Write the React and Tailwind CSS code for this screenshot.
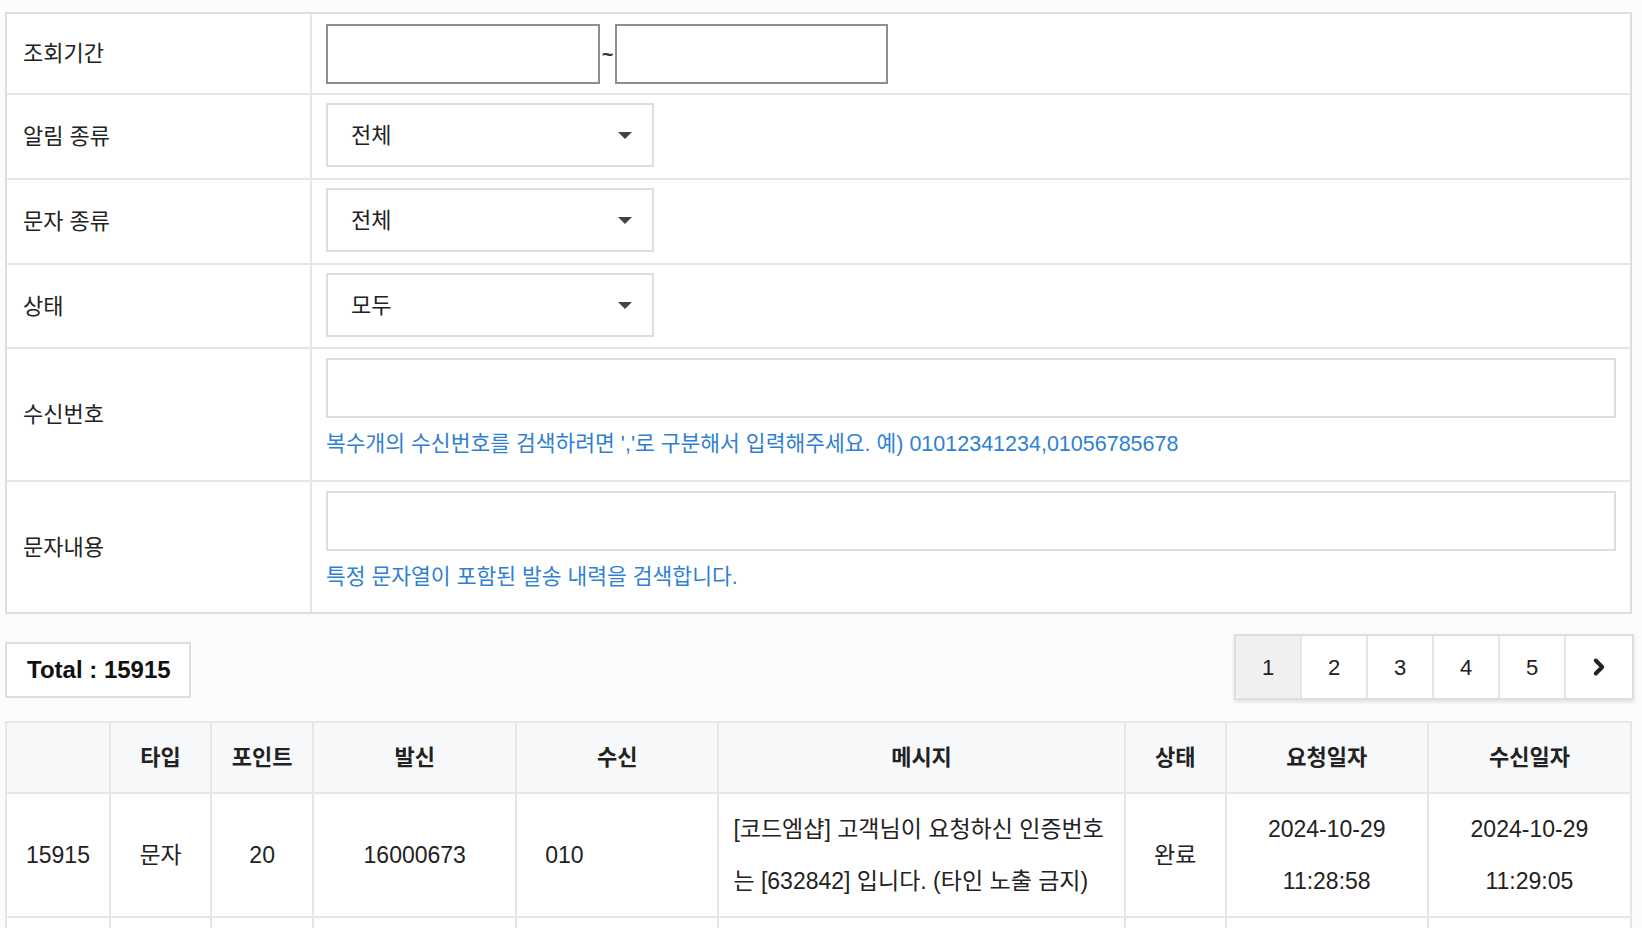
import { ChevronRight } from 'lucide-react'

const font = { fontFamily: '"Liberation Sans", "Noto Sans CJK KR", sans-serif' }

function Label({ children }) {
  return (
    <div className="flex items-center border-r-2 border-[#e6e6e6] pl-[16px] text-[22px] text-[#222]">
      {children}
    </div>
  )
}

function SelectBox({ value }) {
  return (
    <div className="flex h-[64px] w-[328px] items-center justify-between border-2 border-[#dedede] bg-white pl-[23px] pr-[20px] text-[22px] text-[#222]">
      <span>{value}</span>
      <span className="h-0 w-0 border-x-[7px] border-t-[7px] border-x-transparent border-t-[#444]" />
    </div>
  )
}

function Row({ label, children, last }) {
  return (
    <div className={`grid grid-cols-[305px_1fr] ${last ? '' : 'border-b-2 border-[#e6e6e6]'}`}>
      <Label>{label}</Label>
      <div className="px-[14px]">{children}</div>
    </div>
  )
}

const columns = [
  { title: '', w: 'w-[104px]' },
  { title: '타입', w: 'w-[101px]' },
  { title: '포인트', w: 'w-[102px]' },
  { title: '발신', w: 'w-[203px]' },
  { title: '수신', w: 'w-[202px]' },
  { title: '메시지', w: 'w-[406px]' },
  { title: '상태', w: 'w-[101px]' },
  { title: '요청일자', w: 'w-[202px]' },
  { title: '수신일자', w: 'w-[203px]' },
]

export default function App() {
  return (
    <div className="min-h-screen bg-[#fcfcfc] px-[5px] pt-[12px]" style={font}>
      <div className="w-[1627px] border-2 border-[#dedede] bg-white">
        <Row label="조회기간">
          <div className="flex h-[79px] items-center">
            <div className="h-[60px] w-[274px] border-2 border-[#8e8e8e] bg-white" />
            <span className="w-[15px] text-center text-[20px] font-bold leading-none text-[#333]">~</span>
            <div className="h-[60px] w-[273px] border-2 border-[#8e8e8e] bg-white" />
          </div>
        </Row>
        <Row label="알림 종류">
          <div className="pt-[8px] pb-[11px]">
            <SelectBox value="전체" />
          </div>
        </Row>
        <Row label="문자 종류">
          <div className="pt-[8px] pb-[11px]">
            <SelectBox value="전체" />
          </div>
        </Row>
        <Row label="상태">
          <div className="pt-[8px] pb-[10px]">
            <SelectBox value="모두" />
          </div>
        </Row>
        <Row label="수신번호">
          <div className="pt-[9px] pb-[20px]">
            <div className="h-[60px] w-full border-2 border-[#dedede] bg-white" />
            <p className="mt-[10px] text-[21.5px] leading-[32px] text-[#2f7fd2]">
              복수개의 수신번호를 검색하려면 ','로 구분해서 입력해주세요. 예) 01012341234,01056785678
            </p>
          </div>
        </Row>
        <Row label="문자내용" last>
          <div className="pt-[9px] pb-[19px]">
            <div className="h-[60px] w-full border-2 border-[#dedede] bg-white" />
            <p className="mt-[10px] text-[21.5px] leading-[32px] text-[#2f7fd2]">
              특정 문자열이 포함된 발송 내력을 검색합니다.
            </p>
          </div>
        </Row>
      </div>

      <div className="mt-[20px] flex w-[1627px] items-start justify-between">
        <div className="mt-[8px] flex h-[56px] w-[186px] items-center border-2 border-[#dedede] bg-white pl-[20px] text-[24px] font-bold text-[#111]">
          Total : 15915
        </div>
        <div className="mr-[-2px] flex h-[66px] border-2 border-[#dedede] bg-white shadow-[0_2px_4px_rgba(0,0,0,0.12)]">
          {['1', '2', '3', '4', '5'].map((n, i) => (
            <div
              key={n}
              className={`flex w-[66px] items-center justify-center border-r-2 border-[#e6e6e6] text-[22px] text-[#222] ${i === 0 ? 'rounded-bl-[5px] bg-[#f0f0f0]' : 'bg-white'}`}
            >
              {n}
            </div>
          ))}
          <div className="flex w-[66px] items-center justify-center text-[#222]">
            <ChevronRight size={26} strokeWidth={3.6} />
          </div>
        </div>
      </div>

      <table className="mt-[21px] w-[1627px] table-fixed border-collapse border-2 border-[#dedede] bg-white text-[23px] text-[#222]">
        <thead>
          <tr className="h-[71px] bg-[#f7f8fa] text-[22px]">
            {columns.map((c, i) => (
              <th key={i} className={`${c.w} border-2 border-[#e6e6e6] font-bold`}>
                {c.title}
              </th>
            ))}
          </tr>
        </thead>
        <tbody>
          <tr className="h-[124px]">
            <td className="border-2 border-[#e6e6e6] pl-[19px]">15915</td>
            <td className="border-2 border-[#e6e6e6] text-center">문자</td>
            <td className="border-2 border-[#e6e6e6] text-center">20</td>
            <td className="border-2 border-[#e6e6e6] text-center">16000673</td>
            <td className="border-2 border-[#e6e6e6] pl-[28px]">010</td>
            <td className="border-2 border-[#e6e6e6] px-[14px] leading-[52px]">
              [코드엠샵] 고객님이 요청하신 인증번호
              <br />는 [632842] 입니다. (타인 노출 금지)
            </td>
            <td className="border-2 border-[#e6e6e6] text-center">완료</td>
            <td className="border-2 border-[#e6e6e6] text-center leading-[52px]">
              2024-10-29
              <br />
              11:28:58
            </td>
            <td className="border-2 border-[#e6e6e6] text-center leading-[52px]">
              2024-10-29
              <br />
              11:29:05
            </td>
          </tr>
          <tr className="h-[40px]">
            {columns.map((c, i) => (
              <td key={i} className="border-2 border-[#e6e6e6]" />
            ))}
          </tr>
        </tbody>
      </table>
    </div>
  )
}
